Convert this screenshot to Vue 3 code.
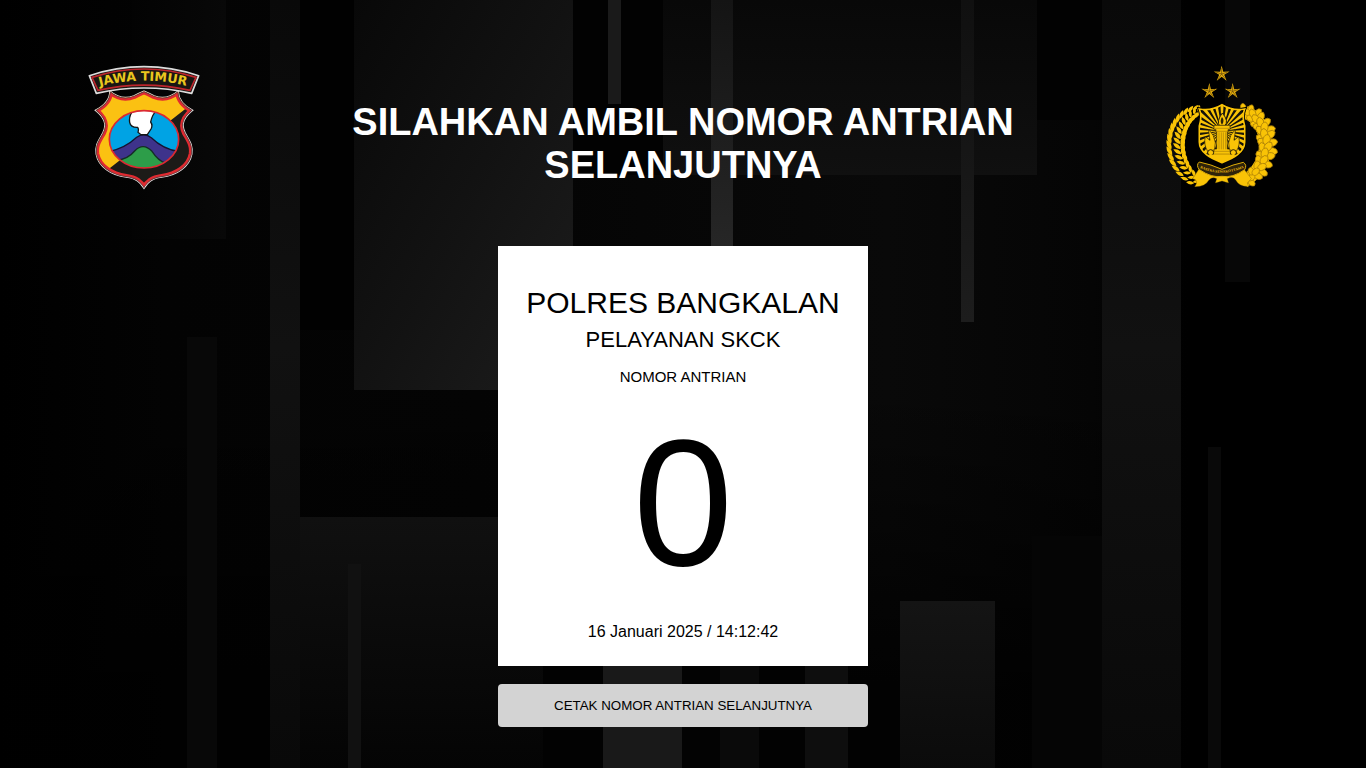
<script setup>
import { ref } from 'vue'

const number = ref(0)
const timestamp = '16 Januari 2025 / 14:12:42'

function bezier(p, t) {
  const u = 1 - t
  const at = (i) => u * u * u * p[0][i] + 3 * u * u * t * p[1][i] + 3 * u * t * t * p[2][i] + t * t * t * p[3][i]
  const slope = (i) => 3 * u * u * (p[1][i] - p[0][i]) + 6 * u * t * (p[2][i] - p[1][i]) + 3 * t * t * (p[3][i] - p[2][i])
  return { x: at(0), y: at(1), angle: (Math.atan2(slope(1), slope(0)) * 180) / Math.PI }
}

const outerSpine = [[92, 146], [8, 176], [0, 318], [100, 368]]
const innerSpine = [[108, 152], [40, 188], [34, 306], [116, 360]]
const cottonSpine = [[250, 150], [334, 176], [342, 314], [246, 364]]

const rice = []
for (let i = 0; i < 17; i++) {
  const t = i / 16.2
  const size = 0.85 + 0.3 * Math.sin(Math.PI * t)
  const outer = bezier(outerSpine, t)
  const inner = bezier(innerSpine, t)
  rice.push({ ...outer, angle: outer.angle + 180 - 14, size })
  rice.push({ ...inner, angle: inner.angle + 180 - 42, size: size * 0.9 })
  rice.push({ ...inner, angle: inner.angle + 180 + 34, size: size * 0.95 })
}

const cotton = []
for (let i = 0; i < 14; i++) {
  const t = i / 13.5
  const p = bezier(cottonSpine, t)
  const size = 0.9 + 0.28 * Math.sin(Math.PI * t)
  for (const turn of [-68, 52, -12]) cotton.push({ ...p, angle: p.angle + 180 + turn + (i % 3) * 13, size })
}

const rays = Array.from({ length: 28 }, (_, i) => {
  const a = (i * Math.PI * 2) / 28
  const b = a + 0.06
  const c = a - 0.06
  return `M180 210L${180 + 130 * Math.cos(c)} ${210 + 130 * Math.sin(c)}L${180 + 130 * Math.cos(b)} ${210 + 130 * Math.sin(b)}Z`
}).join('')

const stars = [[179, 38], [142, 90], [212, 90]]
const starPath = Array.from({ length: 10 }, (_, i) => {
  const r = i % 2 ? 8 : 25
  const a = -Math.PI / 2 + (i * Math.PI) / 5
  return `${i ? 'L' : 'M'}${r * Math.cos(a)} ${r * Math.sin(a)}`
}).join('') + 'Z'
const starFolds = Array.from({ length: 5 }, (_, i) => {
  const a = -Math.PI / 2 + (i * Math.PI * 2) / 5
  return `M0 0L${18 * Math.cos(a)} ${18 * Math.sin(a)}`
}).join('')
</script>

<template>
  <div class="page">
    <svg class="backdrop" viewBox="0 0 1366 768" preserveAspectRatio="none" aria-hidden="true">
      <defs>
        <linearGradient id="base" x1="0" x2="1" y1="0" y2="0">
          <stop offset="0" stop-color="#000" />
          <stop offset="0.12" stop-color="#030303" />
          <stop offset="0.35" stop-color="#040404" />
          <stop offset="0.65" stop-color="#090909" />
          <stop offset="0.8" stop-color="#050505" />
          <stop offset="0.87" stop-color="#000" />
          <stop offset="1" stop-color="#000" />
        </linearGradient>
        <linearGradient id="shade" x1="0" x2="0" y1="0" y2="1">
          <stop offset="0.5" stop-color="#000" stop-opacity="0" />
          <stop offset="0.9" stop-color="#000" stop-opacity="0.8" />
        </linearGradient>
        <linearGradient id="panel" x1="0" x2="1" y1="0" y2="1">
          <stop offset="0" stop-color="#080808" />
          <stop offset="0.5" stop-color="#121212" />
          <stop offset="1" stop-color="#1d1d1d" />
        </linearGradient>
        <linearGradient id="corner" x1="0" x2="1" y1="0" y2="0">
          <stop offset="0" stop-color="#030303" />
          <stop offset="1" stop-color="#080808" />
        </linearGradient>
        <linearGradient id="wide" x1="0" x2="0" y1="0" y2="1">
          <stop offset="0" stop-color="#080808" />
          <stop offset="1" stop-color="#101010" />
        </linearGradient>
        <linearGradient id="rise" x1="0" x2="0" y1="0" y2="1">
          <stop offset="0" stop-color="#101010" />
          <stop offset="1" stop-color="#1d1d1d" />
        </linearGradient>
        <linearGradient id="bright" x1="0" x2="0" y1="0" y2="1">
          <stop offset="0" stop-color="#141414" />
          <stop offset="1" stop-color="#272727" />
        </linearGradient>
        <linearGradient id="fall" x1="0" x2="0" y1="0" y2="1">
          <stop offset="0" stop-color="#101010" />
          <stop offset="1" stop-color="#040404" />
        </linearGradient>
        <linearGradient id="fallLight" x1="0" x2="0" y1="0" y2="1">
          <stop offset="0" stop-color="#141414" />
          <stop offset="1" stop-color="#0b0b0b" />
        </linearGradient>
        <linearGradient id="column" x1="0" x2="0" y1="0" y2="1">
          <stop offset="0" stop-color="#090909" />
          <stop offset="0.45" stop-color="#111" />
          <stop offset="1" stop-color="#090909" />
        </linearGradient>
      </defs>
      <rect width="1366" height="768" fill="url(#base)" />
      <rect width="1366" height="768" fill="url(#shade)" />
      <rect x="132" width="94" height="239" fill="url(#corner)" />
      <rect x="187" y="337" width="30" height="431" fill="#080808" />
      <rect x="300" width="54" height="330" fill="#010101" />
      <rect x="270" width="30" height="768" fill="url(#column)" />
      <rect x="354" width="219" height="390" fill="url(#panel)" />
      <rect x="300" y="517" width="243" height="251" fill="url(#fall)" />
      <rect x="348" y="564" width="13" height="204" fill="#111" />
      <rect x="573" width="90" height="175" fill="#020202" />
      <rect x="608" width="13" height="104" fill="#1a1a1a" />
      <rect x="663" width="374" height="175" fill="url(#wide)" />
      <rect x="1037" width="65" height="120" fill="#020202" />
      <rect x="711" width="22" height="260" fill="url(#bright)" />
      <rect x="961" width="13" height="322" fill="url(#rise)" />
      <rect x="1102" width="79" height="768" fill="url(#column)" />
      <rect x="1225" width="25" height="282" fill="#070707" />
      <rect x="1208" y="447" width="13" height="321" fill="#090909" />
      <rect x="1032" y="536" width="70" height="232" fill="#050505" />
      <rect x="900" y="601" width="95" height="167" fill="url(#fallLight)" />
      <rect x="543" y="640" width="60" height="128" fill="#020202" />
      <rect x="603" y="600" width="79" height="168" fill="#191919" />
      <rect x="682" y="640" width="38" height="128" fill="#030303" />
      <rect x="720" y="640" width="39" height="128" fill="#0a0a0a" />
      <rect x="759" y="640" width="46" height="128" fill="#020202" />
      <rect x="805" y="640" width="43" height="128" fill="#0e0e0e" />
    </svg>

    <header class="header">
      <svg class="logo" viewBox="0 0 360 405" role="img" aria-label="Jawa Timur">
        <defs>
          <path id="shieldShape" d="M78 94Q112 123 150 108Q168 99 180 94Q192 99 210 108Q248 123 282 94Q284 130 325 151C302 170 288 190 303 219C316 242 327 256 323 282C316 320 278 345 233 351C203 355 191 366 180 384C169 366 157 355 127 351C82 345 44 320 37 282C33 256 44 242 57 219C72 190 58 170 35 151C76 130 78 105 78 94Z" />
          <clipPath id="shieldClip"><use href="#shieldShape" /></clipPath>
          <clipPath id="ovalClip"><ellipse cx="180" cy="238" rx="104" ry="86" /></clipPath>
          <path id="bannerArc" d="M47 79Q180 44 322 81" />
        </defs>
        <use href="#shieldShape" fill="#1d1b18" stroke="#ddd" stroke-width="5" />
        <g clip-path="url(#shieldClip)">
          <path d="M0 80H360V110L320 134L78 324L40 345H0Z" fill="#fbc112" />
          <use href="#shieldShape" fill="none" stroke="#e02a30" stroke-width="18" />
          <use href="#shieldShape" fill="none" stroke="#444" stroke-width="4" />
        </g>
        <g clip-path="url(#ovalClip)">
          <path d="M70 140H290V340H70Z" fill="#00a3e4" />
          <path d="M70 276Q122 266 158 232Q180 216 202 233Q240 270 290 275V340H70Z" fill="#3e338b" stroke="#141432" stroke-width="4" />
          <path d="M94 302Q132 298 152 273Q177 246 204 274Q222 302 246 310V340H94Z" fill="#2d9d49" stroke="#142d26" stroke-width="4" />
          <path d="M148 151Q134 167 137 187Q140 203 161 202Q165 207 162 217L171 224H190L201 207Q207 196 200 186Q205 163 218 151Z" fill="#fff" stroke="#161616" stroke-width="4" />
        </g>
        <ellipse cx="180" cy="238" rx="104" ry="86" fill="none" stroke="#dc2931" stroke-width="5" />
        <path d="M16 47Q180 -7 344 47L323 100Q180 68 37 100Z" fill="#191713" stroke="#ddd" stroke-width="5" stroke-linejoin="round" />
        <path d="M24 52Q180 2 336 52L318 91Q180 60 42 91Z" fill="none" stroke="#bd252c" stroke-width="5" />
        <text class="banner"><textPath href="#bannerArc">JAWA TIMUR</textPath></text>
      </svg>

      <h1 class="title">SILAHKAN AMBIL NOMOR ANTRIAN SELANJUTNYA</h1>

      <svg class="logo" viewBox="0 0 360 405" role="img" aria-label="Rastra Sewakottama">
        <defs>
          <path id="crest" d="M180 130Q147 150 112 143Q121 165 112 194V242C112 274 146 290 180 304C214 290 248 274 248 242V194Q239 165 248 143Q213 150 180 130Z" />
          <clipPath id="crestClip"><use href="#crest" /></clipPath>
          <path id="leaf" d="M0 0Q10 -12 28 -3Q15 10 0 0Z" />
          <path id="petal" d="M0 0Q4 -14 17 -11Q29 -8 28 2Q16 14 0 0Z" />
          <path id="motto" d="M114 320Q180 350 248 318" />
        </defs>
        <g transform="translate(0 4)">
          <g v-for="(s, i) in stars" :key="i" :transform="`translate(${s[0]} ${s[1]})`">
            <path :d="starPath" fill="#e7b00c" />
            <path :d="starFolds" fill="none" stroke="#5d430a" stroke-width="2" />
          </g>
          <g fill="#f9c306">
            <use v-for="(l, i) in rice" :key="i" href="#leaf" :transform="`translate(${l.x} ${l.y}) rotate(${l.angle}) scale(${l.size})`" />
          </g>
          <path d="M250 152C326 182 336 305 246 361" fill="none" stroke="#f9c306" stroke-width="38" />
          <g fill="#f9c306" stroke="#a87d08" stroke-width="2">
            <use v-for="(l, i) in cotton" :key="i" href="#petal" :transform="`translate(${l.x} ${l.y}) rotate(${l.angle}) scale(${l.size})`" />
          </g>
          <use href="#crest" fill="#16130b" stroke="#000" stroke-width="10" />
          <g clip-path="url(#crestClip)">
            <path :d="rays" fill="#f9c306" />
            <path d="M157 270H137Q124 249 130 226L144 237L139 203Q158 221 160 244ZM203 270H223Q236 249 230 226L216 237L221 203Q202 221 200 244Z" fill="#f9c306" stroke="#2b2108" stroke-width="2" />
            <path d="M181 155Q202 180 188 194H173Q162 181 181 155Z" fill="#f9c306" stroke="#2b2108" stroke-width="3" />
            <path d="M180 167Q189 178 180 190Q172 180 180 167Z" fill="#2b2108" />
            <path d="M156 192H204V205H198V212H196V263H204V272H213V282H147V272H156V263H164V212H162V205H156Z" fill="#f9c306" stroke="#2b2108" stroke-width="2" />
            <path d="M158 201H202M163 210H197M171 213V264M178 213V264M184 213V264M191 213V264M158 270H202M148 278H212M137 288H223" fill="none" stroke="#a87d08" stroke-width="2" />
            <circle cx="146" cy="274" r="9" fill="#f9c306" stroke="#2b2108" stroke-width="3" />
            <circle cx="214" cy="274" r="9" fill="#f9c306" stroke="#2b2108" stroke-width="3" />
            <path d="M125 286L180 316L235 286L213 280H147Z" fill="#f9c306" />
            <path d="M137 287L180 308L223 287" fill="none" stroke="#624805" stroke-width="3" />
          </g>
          <use href="#crest" fill="none" stroke="#f9c306" stroke-width="5" />
          <path d="M114 318L92 352Q112 356 98 376Q129 377 141 356Q151 345 164 352L160 365L180 359L200 365L196 352Q213 344 221 356Q232 377 260 375L256 365L268 352L242 318Q180 360 114 318Z" fill="#f9c306" stroke="#594407" stroke-width="1" />
          <path d="M112 302Q101 311 112 325Q151 351 180 345Q211 351 248 325Q256 311 244 303Q214 309 180 324Q147 309 112 302Z" fill="#2e230a" stroke="#dfad08" stroke-width="3" />
          <text class="motto"><textPath href="#motto">RASTRA SEWAKOTTAMA</textPath></text>
        </g>
      </svg>
    </header>

    <main class="queue">
      <section class="ticket">
        <h2 class="office">POLRES BANGKALAN</h2>
        <p class="service">PELAYANAN SKCK</p>
        <p class="label">NOMOR ANTRIAN</p>
        <p class="number">{{ number }}</p>
        <p class="time">{{ timestamp }}</p>
      </section>
      <button class="print" type="button">CETAK NOMOR ANTRIAN SELANJUTNYA</button>
    </main>
  </div>
</template>

<style>
body {
  background: #000;
}
</style>

<style scoped>
.page {
  position: relative;
  min-height: 100vh;
  box-sizing: border-box;
  overflow: hidden;
  background: #000;
  font-family: "Liberation Sans", Arial, sans-serif;
}

.backdrop {
  position: absolute;
  inset: 0;
  width: 100%;
  height: 100%;
}

.header {
  position: relative;
  display: flex;
  justify-content: space-between;
  align-items: flex-start;
  padding: 60px 84px 0;
}

.logo {
  flex: none;
  width: 120px;
}

.banner {
  font: bold 38px "DejaVu Sans", sans-serif;
  fill: #eac61e;
}

.motto {
  font: bold 11px "Liberation Serif", serif;
  fill: #f0bd0a;
}

.title {
  max-width: 720px;
  margin: 41px 0 0;
  color: #fff;
  font-size: 38px;
  line-height: 43px;
  text-align: center;
}

.queue {
  position: relative;
  display: flex;
  flex-direction: column;
  gap: 18px;
  max-width: 370px;
  margin: 51px auto 40px;
}

.ticket {
  padding: 39px 16px 25px;
  background: #fff;
  color: #000;
  text-align: center;
}

.ticket > * {
  margin: 0;
}

.ticket .office {
  font-size: 30px;
  font-weight: 400;
  line-height: 36px;
}

.ticket .service {
  margin-top: 6px;
  font-size: 22px;
  line-height: 26px;
}

.ticket .label {
  margin-top: 15px;
  font-size: 15px;
  line-height: 18px;
}

.ticket .number {
  margin-top: 27px;
  font-size: 180px;
  line-height: 180px;
}

.ticket .time {
  margin-top: 30px;
  font-size: 16px;
  line-height: 18px;
}

.print {
  padding: 14px;
  border: 0;
  border-radius: 4px;
  background: #d3d3d3;
  color: #000;
  font-family: inherit;
  cursor: pointer;
}
</style>
